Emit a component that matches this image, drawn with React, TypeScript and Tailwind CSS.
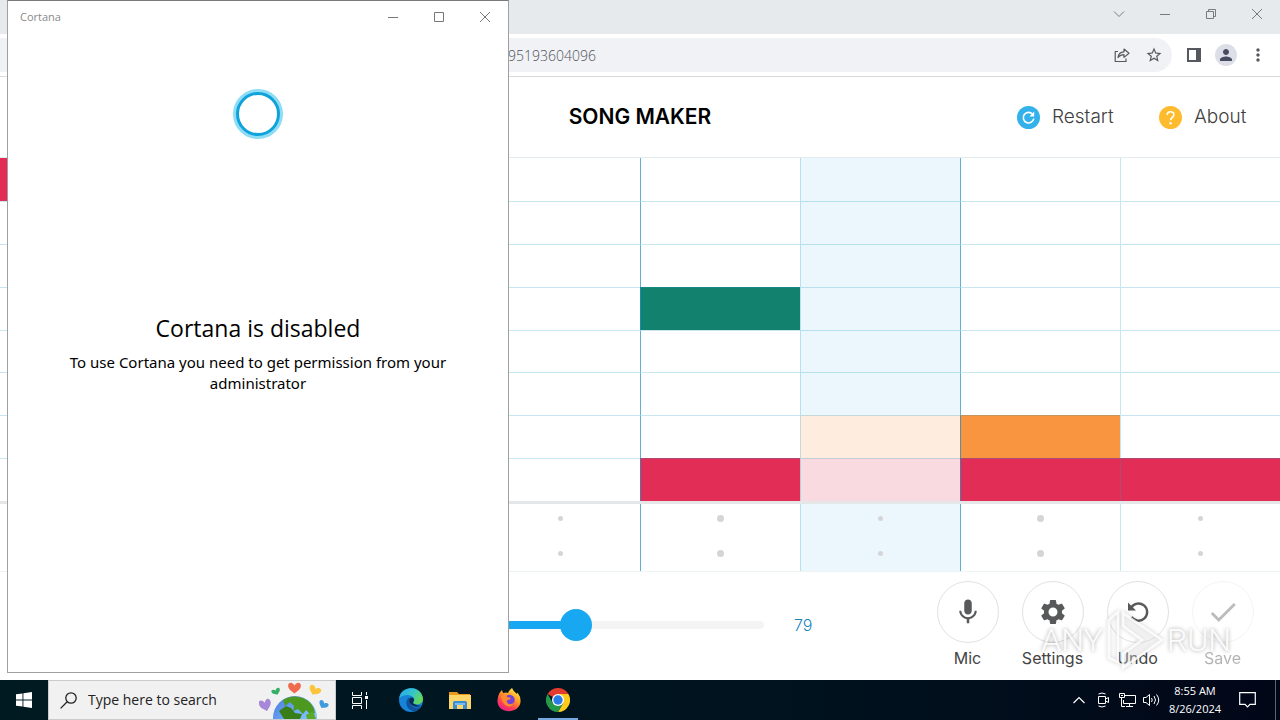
import React from "react";
import { MdMic, MdSettings, MdCheck, MdStarBorder, MdMoreVert, MdPerson } from "react-icons/md";

const COLUMNS = [0, 1, 2, 3, 4, 5, 6, 7];
const ROWS = [0, 1, 2, 3, 4, 5, 6, 7];
const ACTIVE_COLUMN = 5;

const NOTES: Record<string, string> = {
  "0-0": "bg-[#e22e56]",
  "3-4": "bg-[#12826f]",
  "6-5": "bg-[#feeddf]",
  "6-6": "bg-[#f99540]",
  "7-4": "bg-[#e22e56]",
  "7-5": "bg-[#f9dae0]",
  "7-6": "bg-[#e22e56]",
  "7-7": "bg-[#e22e56]",
};

function columnBorder(col: number) {
  if (col === 0) return "border-l-0";
  return col % 2 === 0 ? "border-l border-l-[#1c8fc8b3]" : "border-l border-l-[#1ca0c840]";
}

function columnFill(col: number) {
  return col === ACTIVE_COLUMN ? "bg-[#ebf6fd]" : "bg-white";
}

function CortanaWindow() {
  return (
    <section
      aria-label="Cortana"
      className="absolute top-0 left-[7px] z-10 flex h-[673px] w-[502px] flex-col border border-[#a0a0a0] border-t-[#7a7a7a] bg-white font-['Open_Sans',sans-serif]"
    >
      <header className="flex h-8 items-center justify-between pl-3">
        <span className="text-[11px] text-[#8a8a8a]">Cortana</span>
        <div className="flex text-[#777777]">
          <button aria-label="Minimize" className="flex h-8 w-[46px] items-center justify-center">
            <svg width="10" height="10" viewBox="0 0 10 10" stroke="currentColor"><path d="M0 5.5H10" /></svg>
          </button>
          <button aria-label="Maximize" className="flex h-8 w-[46px] items-center justify-center">
            <svg width="10" height="10" viewBox="0 0 10 10" fill="none" stroke="currentColor"><path d="M.5 .5h9v9h-9z" /></svg>
          </button>
          <button aria-label="Close" className="flex h-8 w-[46px] items-center justify-center">
            <svg width="10" height="10" viewBox="0 0 10 10" stroke="currentColor"><path d="M0 0L10 10M10 0L0 10" /></svg>
          </button>
        </div>
      </header>
      <div className="flex flex-col items-center pt-14">
        <svg width="50" height="50" viewBox="0 0 50 50" fill="none">
          <circle cx="25" cy="25" r="23" stroke="#8fdcf5" strokeWidth="4" />
          <circle cx="25" cy="25" r="20.5" stroke="#0fa3dc" strokeWidth="3" />
        </svg>
        <h1 className="mt-[171px] text-[23px] leading-9 text-black">Cortana is disabled</h1>
        <p className="mt-1.5 w-[400px] text-center font-['Noto_Sans',sans-serif] text-[15px] leading-[21px] text-black">
          To use Cortana you need to get permission from your administrator
        </p>
      </div>
    </section>
  );
}

function BrowserChrome() {
  return (
    <div className="font-['Open_Sans',sans-serif]">
      <div className="flex h-[34px] items-start justify-end bg-[#e7eaed] text-[#777b80]">
        <button aria-label="Search tabs" className="flex h-7 w-[46px] items-center justify-center">
          <svg width="12" height="12" viewBox="0 0 12 12" fill="none" stroke="currentColor"><path d="M1 3.5L6 8.5L11 3.5" /></svg>
        </button>
        <button aria-label="Minimize browser" className="flex h-7 w-[46px] items-center justify-center">
          <svg width="10" height="10" viewBox="0 0 10 10" stroke="currentColor"><path d="M0 5.5H10" /></svg>
        </button>
        <button aria-label="Restore browser" className="flex h-7 w-[46px] items-center justify-center">
          <svg width="10" height="10" viewBox="0 0 10 10" fill="none" stroke="currentColor"><path d="M.5 2.5h7v7h-7zM2.5 2.5v-2h7v7h-2" /></svg>
        </button>
        <button aria-label="Close browser" className="flex h-7 w-[46px] items-center justify-center">
          <svg width="10" height="10" viewBox="0 0 10 10" stroke="currentColor"><path d="M0 0L10 10M10 0L0 10" /></svg>
        </button>
      </div>
      <div className="flex h-[43px] items-center border-b border-[#d8dadd] bg-white pr-1.5 text-[#55595f]">
        <div className="flex h-[34px] flex-1 items-center rounded-r-full bg-[#f1f2f6] pr-0.5">
          <input
            aria-label="Address"
            readOnly
            value="95193604096"
            className="ml-[508px] h-full min-w-0 flex-1 bg-transparent text-sm font-light text-[#4f5358] outline-none"
          />
          <button aria-label="Share" className="flex h-8 w-8 items-center justify-center">
            <svg width="16" height="16" viewBox="0 0 16 16" fill="none" stroke="currentColor" strokeWidth="1.2" strokeLinejoin="round">
              <path d="M4 4.5H1.2V14.5H12V11.5" />
              <path d="M4 10.5C4.3 6.8 6.6 5 10 4.8V2L15 6.2L10 10.4V7.6C7.4 7.6 5.6 8.4 4 10.5Z" />
            </svg>
          </button>
          <button aria-label="Bookmark this tab" className="flex h-8 w-8 items-center justify-center">
            <MdStarBorder size={18} />
          </button>
        </div>
        <div className="flex items-center pl-1.5">
          <button aria-label="Side panel" className="flex h-8 w-8 items-center justify-center">
            <svg width="14" height="14" viewBox="0 0 14 14"><path fill="currentColor" fillRule="evenodd" d="M0 0H14V14H0ZM2 2V12H9V2Z" /></svg>
          </button>
          <button aria-label="Profile" className="flex h-8 w-8 items-center justify-center">
            <span className="flex h-[22px] w-[22px] items-center justify-center rounded-full bg-[#dddfe8] text-[#484c60]">
              <MdPerson size={18} />
            </span>
          </button>
          <button aria-label="Browser menu" className="flex h-8 w-8 items-center justify-center">
            <MdMoreVert size={20} />
          </button>
        </div>
      </div>
    </div>
  );
}

function SongHeader() {
  return (
    <header className="grid h-20 grid-cols-3 items-center bg-white px-[27px] font-[Inter,sans-serif]">
      <span />
      <h2 className="text-center text-[21px] font-semibold text-black">SONG MAKER</h2>
      <div className="flex items-center justify-end gap-9 text-[19px] font-light text-[#404040]">
        <button className="flex w-[106px] items-center gap-3">
          <svg width="23" height="23" viewBox="0 0 23 23" fill="none" className="shrink-0">
            <circle cx="11.5" cy="11.5" r="11.5" fill="#32b1ea" />
            <path d="M15.6 8.2A5.3 5.3 0 1 0 16.8 12.6" stroke="#fff" strokeWidth="1.6" />
            <path d="M17.2 5.6V10.4H12.4Z" fill="#fff" />
          </svg>
          Restart
        </button>
        <button className="flex w-[94px] items-center gap-3">
          <svg width="23" height="23" viewBox="0 0 23 23" fill="none" className="shrink-0">
            <circle cx="11.5" cy="11.5" r="11.5" fill="#fdbb2d" />
            <path d="M8.2 9C8.2 4.6 14.9 4.7 14.9 8.8C14.9 11.4 11.6 11.5 11.6 14.3" stroke="#fff" strokeWidth="1.6" />
            <circle cx="11.6" cy="17.2" r="1.2" fill="#fff" />
          </svg>
          About
        </button>
      </div>
    </header>
  );
}

function NoteGrid() {
  return (
    <div className="border-t border-[#e3edf0]">
      <div className="grid h-[343px] grid-cols-8 grid-rows-8">
        {ROWS.map((row) =>
          COLUMNS.map((col) => (
            <button
              key={`${row}-${col}`}
              aria-label={`Note row ${row + 1}, beat ${col + 1}`}
              className={`${row === 0 ? "" : "border-t border-t-[#1ca0c840]"} ${columnBorder(col)} ${NOTES[`${row}-${col}`] ?? columnFill(col)}`}
            />
          )),
        )}
      </div>
      <div className="grid grid-cols-8 border-t-[3px] border-b border-t-[#e4e6e8] border-b-[#edf2f4]">
        {COLUMNS.map((col) => (
          <div key={col} className={`flex h-[67px] flex-col items-center justify-between pt-1.5 pb-2.5 ${columnBorder(col)} ${columnFill(col)}`}>
            {[1, 2].map((drum) => (
              <button key={drum} aria-label={`Drum ${drum}, beat ${col + 1}`} className="flex h-4 w-4 items-center justify-center">
                <span className={`rounded-full bg-[#d3d5d7] ${col % 2 === 0 ? "h-[7px] w-[7px]" : "h-[5px] w-[5px]"}`} />
              </button>
            ))}
          </div>
        ))}
      </div>
    </div>
  );
}

function RoundButton({ label, children, faded }: { label: string; children: React.ReactNode; faded?: boolean }) {
  return (
    <button className={`flex w-[85px] flex-col items-center gap-[5px] text-[#58595b] ${faded ? "opacity-40" : ""}`}>
      <span className="flex h-[62px] w-[62px] items-center justify-center rounded-full border border-[#e2e2e2]">{children}</span>
      <span className="font-[Inter,sans-serif] text-base leading-5 text-[#444444]">{label}</span>
    </button>
  );
}

function Watermark() {
  return (
    <div aria-hidden="true" className="pointer-events-none absolute top-9 right-12 flex items-center font-[Roboto,sans-serif] text-[32px] leading-[60px] font-light text-white/90 [text-shadow:0_0_4px_#00000060]">
      <span className="w-16 text-center">ANY</span>
      <svg width="62" height="64" viewBox="0 0 62 64" fill="none" className="drop-shadow-[0_0_2px_#00000040]">
        <path d="M5 50V12L14 4V54Z" stroke="#ffffffd0" strokeWidth="2.500" />
        <path d="M19 5L58 32L19 60V46L38 32L19 18Z" fill="#ffffff50" stroke="#ffffffd0" strokeWidth="2.500" />
      </svg>
      <span className="w-[66px] text-center">RUN</span>
    </div>
  );
}

function Controls() {
  return (
    <div className="relative flex flex-1 items-start bg-white">
      <div className="flex h-[106px] flex-1 items-center gap-[30px] pl-[388px] font-[Inter,sans-serif]">
        <input
          type="range"
          aria-label="Tempo"
          min={0}
          max={200}
          defaultValue={100}
          className="h-8 w-[376px] appearance-none bg-transparent [&::-webkit-slider-runnable-track]:h-2 [&::-webkit-slider-runnable-track]:rounded-full [&::-webkit-slider-runnable-track]:bg-[linear-gradient(to_right,#18a8f1_50%,#f4f4f4_50%)] [&::-webkit-slider-thumb]:-mt-3 [&::-webkit-slider-thumb]:h-8 [&::-webkit-slider-thumb]:w-8 [&::-webkit-slider-thumb]:appearance-none [&::-webkit-slider-thumb]:rounded-full [&::-webkit-slider-thumb]:bg-[#18a8f1]"
        />
        <output className="text-base font-light text-[#1a84bb]">79</output>
      </div>
      <div className="flex pt-[9px] pr-[15px]">
        <RoundButton label="Mic"><MdMic size={30} /></RoundButton>
        <RoundButton label="Settings"><MdSettings size={30} /></RoundButton>
        <RoundButton label="Undo">
          <svg width="24" height="24" viewBox="0 0 24 24" fill="none">
            <path d="M5.2 7.600A8.600 8.600 0 1 1 5.500 17" stroke="currentColor" strokeWidth="2.4" />
            <path d="M2 2.500V10.500H10Z" fill="currentColor" />
          </svg>
        </RoundButton>
        <RoundButton label="Save" faded><MdCheck size={34} /></RoundButton>
      </div>
      <Watermark />
    </div>
  );
}

function EarthIllustration() {
  const heart = "M0 3C-3-2-9-1-8.500 3.500C-8 8-3 9.500 0 12C3 9.500 8 8 8.500 3.500C9-1 3-2 0 3Z";
  return (
    <svg width="72" height="38" viewBox="0 0 72 38" aria-hidden="true">
      <defs>
        <linearGradient id="ocean" x1="0" y1="0" x2="1" y2="1">
          <stop offset="0" stopColor="#4a78dd" />
          <stop offset="0.5" stopColor="#72b3fa" />
          <stop offset="1" stopColor="#9be1fb" />
        </linearGradient>
      </defs>
      <circle cx="36" cy="37" r="22" fill="url(#ocean)" />
      <path d="M24 19Q33 13 44 17Q55 22 56 32L50 32L47 29L44 33L39 28L34 30L35 25L31 21L26 25Z" fill="#4d981f" />
      <path d="M20 30L27 25L32 27L36 32L43 33L41 38H25Z" fill="#377d18" />
      <path d="M47 34L54 30L57 38H48Z" fill="#5aa928" />
      <path d={heart} fill="#f06a4e" transform="translate(35.500 2) scale(.75 .88)" />
      <path d={heart} fill="#35ae66" transform="translate(16 8) rotate(-22) scale(.52)" />
      <path d={heart} fill="#fbc43b" transform="translate(57.500 6) rotate(28) scale(.72)" />
      <path d={heart} fill="#a887d8" transform="translate(5 19) rotate(-15) scale(.7 .95)" />
      <path d={heart} fill="#3e9bdd" transform="translate(66 21) rotate(32) scale(.58)" />
    </svg>
  );
}

function EdgeIcon() {
  return (
    <svg width="24" height="24" viewBox="0 0 24 24">
      <defs>
        <linearGradient id="edgeTop" x1="0" y1="0" x2="1" y2=".4">
          <stop offset="0" stopColor="#27a9e8" /><stop offset=".6" stopColor="#34c5ca" /><stop offset="1" stopColor="#65d65c" />
        </linearGradient>
      </defs>
      <circle cx="12" cy="12" r="12" fill="#1684d8" />
      <path d="M.3 10C2-2.500 22-3.500 24 10.500C24.300 16 18 17.500 14.500 15.500C13 14.500 15.500 14 15 11C14 6 5 5.500 .3 10Z" fill="url(#edgeTop)" />
      <path d="M10 9.500C5 13 7 21.500 15 23.600C19 22.500 21 20.700 22.300 18.500C15 22 9.500 17 11.500 12Z" fill="#10529c" />
      <path d="M14.500 15.500C13 14.500 15.500 14 15 11C13 8 9.500 10 10.500 14C12 18.500 18.500 20 22.500 17.500C20 18 16.500 17 14.500 15.500Z" fill="#062d52" />
    </svg>
  );
}

function FolderIcon() {
  return (
    <svg width="22" height="19" viewBox="0 0 22 19">
      <path d="M0 1H8L10 3H21V7H0Z" fill="#e8981c" />
      <path d="M0 4H22V18H0Z" fill="#fdd568" />
      <path d="M4 18V11.500Q4 10 5.500 10H16.500Q18 10 18 11.500V18H14V14H8V18Z" fill="#3b8fd0" />
      <path d="M6 12H16V14H6Z" fill="#77baf0" />
    </svg>
  );
}

function FirefoxIcon() {
  return (
    <svg width="24" height="24" viewBox="0 0 24 24">
      <defs>
        <linearGradient id="fox" x1=".8" y1="0" x2=".2" y2="1">
          <stop offset="0" stopColor="#fff044" /><stop offset=".4" stopColor="#ff9a26" /><stop offset=".7" stopColor="#ff4053" /><stop offset="1" stopColor="#e51c8c" />
        </linearGradient>
      </defs>
      <path d="M2.500 5L5 2L6 5L9 4.500L11 5Q12 2 15 0Q16 3 20 6L20.500 4.500Q24 9 23.500 14C22 27-.5 26 .5 12Q.8 8 2.500 5Z" fill="url(#fox)" />
      <circle cx="12.500" cy="12" r="5.200" fill="#7541d8" />
      <path d="M4 8Q8 6 10.500 9L14 10Q13 12 10.500 12Q9 13.500 11 15.500Q14 17.500 17 14.500Q15.500 19 11 18.500Q5 17 4 8Z" fill="#ff8a2b" />
    </svg>
  );
}

function ChromeIcon() {
  return (
    <svg width="24" height="24" viewBox="0 0 24 24">
      <path d="M12 12L1.600 6A12 12 0 0 1 22.400 6Z" fill="#e33b2e" />
      <path d="M12 6H22.400A12 12 0 0 1 12 24L17.200 15Z" fill="#fccb1c" />
      <path d="M6.800 15L1.600 6A12 12 0 0 0 12 24L17.200 15Z" fill="#25994a" />
      <circle cx="12" cy="12" r="6" fill="#fff" />
      <circle cx="12" cy="12" r="4.700" fill="#2a7ce8" />
    </svg>
  );
}

function TaskButton({ label, active, children }: { label: string; active?: boolean; children: React.ReactNode }) {
  return (
    <button aria-label={label} className={`flex h-10 w-10 items-center justify-center border-b-2 pt-0.5 ${active ? "border-[#76a9e0]" : "border-transparent"}`}>
      {children}
    </button>
  );
}

function Taskbar() {
  return (
    <footer className="flex h-10 items-stretch bg-[linear-gradient(to_right,#001a22,#00131f_60%,#020718)] font-['Open_Sans',sans-serif] text-white">
      <button aria-label="Start" className="flex w-12 items-center justify-center">
        <svg width="16" height="16" viewBox="0 0 16 16" fill="#fff"><path d="M0 2.300L6.500 1.400V7.500H0ZM7.400 1.300L16 0V7.500H7.400ZM0 8.500H6.500V14.600L0 13.700ZM7.400 8.500H16V16L7.400 14.700Z" /></svg>
      </button>
      <label className="flex w-72 items-center border border-[#c8cccf] bg-[#f1f1f1] pl-[11px] text-black">
        <svg width="17" height="17" viewBox="0 0 17 17" fill="none" stroke="#222" strokeWidth="1.300"><circle cx="11" cy="6" r="5.200" /><path d="M7.200 9.800L.6 16.400" /></svg>
        <input aria-label="Search" placeholder="Type here to search" className="ml-[11px] w-40 min-w-0 flex-1 bg-transparent text-sm text-[#222222] outline-none placeholder:text-[#222222]" />
        <span className="mr-1 shrink-0"><EarthIllustration /></span>
      </label>
      <nav aria-label="Pinned apps" className="flex flex-1 gap-[9px] pl-1">
        <TaskButton label="Task view">
          <svg width="18" height="17" viewBox="0 0 18 17" fill="none" stroke="#fff"><path d="M1.500 0V3.500H10.500V0M1.500 17V13.500H10.500V17M1.500 5.500H10.500V11.500H1.500ZM15.500 0V3M15.500 8V17" /><path d="M14 4H17V7H14Z" fill="#fff" stroke="none" /></svg>
        </TaskButton>
        <span className="flex gap-[9px] pl-0.5">
          <TaskButton label="Edge"><EdgeIcon /></TaskButton>
          <TaskButton label="File Explorer"><FolderIcon /></TaskButton>
          <TaskButton label="Firefox"><FirefoxIcon /></TaskButton>
          <TaskButton label="Chrome" active><ChromeIcon /></TaskButton>
        </span>
      </nav>
      <div className="flex items-center">
        <button aria-label="Show hidden icons" className="flex h-10 w-6 items-center justify-center">
          <svg width="12" height="8" viewBox="0 0 12 8" fill="none" stroke="#fff" strokeWidth="1.200"><path d="M.5 7L6 1.500L11.500 7" /></svg>
        </button>
        <button aria-label="Camera" className="flex h-10 w-6 items-center justify-center">
          <svg width="12" height="16" viewBox="0 0 12 16" fill="none" stroke="#fff"><path d="M1.500 4.500H8.500V11.500H1.500ZM8.500 7L11.500 5.500V10.500L8.500 9M1.500 2Q5 0 8.500 2M1.500 14Q5 16 8.500 14" /></svg>
        </button>
        <button aria-label="Network" className="flex h-10 w-6 items-center justify-center">
          <svg width="17" height="15" viewBox="0 0 17 15" fill="none" stroke="#fff"><path d="M6 2.500H16.500V10.500H4.500V7M10.500 10.500V13.500M7 13.500H14M.5 .5H5.500V4.500H.5ZM2.500 4.500V13.500H6" /><path d="M2 2H4V3H2Z" fill="#fff" stroke="none" /></svg>
        </button>
        <button aria-label="Volume" className="flex h-10 w-6 items-center justify-center">
          <svg width="17" height="14" viewBox="0 0 17 14" fill="none" stroke="#fff"><path d="M.5 4.500H3L6.500 1.500V12.500L3 9.500H.5ZM8.500 5Q10 7 8.500 9M11 3Q14 7 11 11M13.500 1.500Q18 7 13.500 12.500" /></svg>
        </button>
        <div className="w-16 text-center text-[11px] leading-[18px] whitespace-nowrap">
          <div>8:55 AM</div>
          <div>8/26/2024</div>
        </div>
        <button aria-label="Notifications" className="flex h-10 w-10 items-center justify-center">
          <svg width="17" height="16" viewBox="0 0 17 16" fill="none" stroke="#fff" strokeWidth="1.200"><path d="M.7 .7H16.300V12.300H11L8.500 14.800L6 12.300H.7Z" /></svg>
        </button>
        <span className="ml-2 h-10 w-[5px] border-l border-[#5d6470]" />
      </div>
    </footer>
  );
}

export default function App() {
  return (
    <main className="relative flex min-h-screen flex-col overflow-hidden bg-white">
      <BrowserChrome />
      <SongHeader />
      <NoteGrid />
      <Controls />
      <Taskbar />
      <CortanaWindow />
    </main>
  );
}
